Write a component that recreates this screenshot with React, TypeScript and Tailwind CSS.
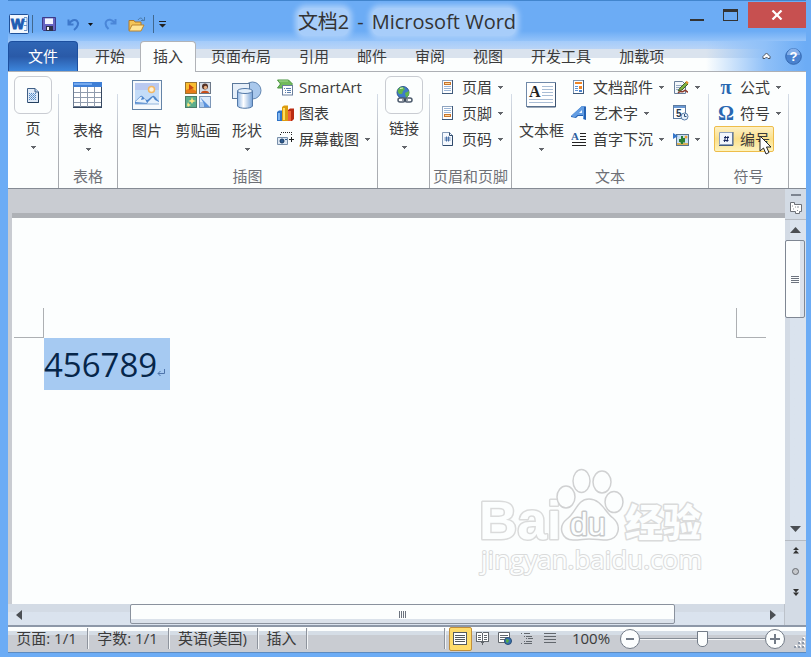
import type { ReactNode } from "react"
import { clsx } from "clsx"

const tabs = ["开始", "插入", "页面布局", "引用", "邮件", "审阅", "视图", "开发工具", "加载项"]

const Arrow = () => (
    <svg width="5" height="3" viewBox="0 0 5 3" className="shrink-0" shapeRendering="crispEdges"><path d="M0 0h5v1H4v1H3v1H2V2H1V1H0z" fill="#63666b" /></svg>
)

const Divider = () => (
    <div className="w-px shrink-0 mt-5 bg-linear-to-b from-[#d5dde8] via-[#b6b9be] to-[#a5a8ad]"></div>
)

type GroupProps = { label?: string, className: string, children: ReactNode }

const Group = ({ label, className, children }: GroupProps) => (
    <section className={clsx("shrink-0 flex flex-col justify-between", className)}>
        <div className="flex">{children}</div>
        <h2 className="h-6 text-center leading-6 text-[#6e7076]">{label}</h2>
    </section>
)

type BigProps = { label: string, icon: ReactNode, className: string, arrow?: boolean, framed?: boolean }

const BigButton = ({ label, icon, className, arrow, framed }: BigProps) => (
    <button type="button" className={clsx("flex flex-col items-center shrink-0 whitespace-nowrap", className)}>
        <span className={clsx("flex items-center justify-center", framed ? "size-[38px] mt-0.5 border border-[#c9ccd2] rounded-md" : "h-[42px]")}>{icon}</span>
        <span className="h-8 leading-7">{label}</span>
        {arrow && <Arrow />}
    </button>
)

type RowProps = { label?: string, icon: ReactNode, arrow?: boolean, name?: string }

const RowButton = ({ label, icon, arrow, name }: RowProps) => (
    <button type="button" aria-label={name} className="flex items-center gap-1.5 h-[26px] whitespace-nowrap">
        <span className="w-4 flex justify-center [&>*]:shrink-0">{icon}</span>
        {label && <span>{label}</span>}
        {arrow && <Arrow />}
    </button>
)

/* ---- ribbon icons ---- */

const PageIcon = () => (
    <svg width="12" height="15" viewBox="0 0 12 15">
        <path d="M.5.5h7.500l3.500 3.500v10.500H.5z" fill="#dfeaf7" stroke="#3f5f86" />
        <path d="M11.500 4v10.500H1" fill="none" stroke="#24405f" />
        <path d="M8 .5V4h3.500" fill="#bcd5f0" stroke="#3f5f86" />
        <path d="M2 5.500h7M2 7.500h7M2 9.500h7M2 11.500h7" stroke="#4f86c4" strokeDasharray="1 1" />
        <path d="M3 6.500h6M3 8.500h6M3 10.500h6" stroke="#6f9ed0" strokeDasharray="1 1" />
    </svg>
)

const TableIcon = () => (
    <svg width="30" height="26" viewBox="0 0 30 26" shapeRendering="crispEdges">
        <rect x=".5" y=".5" width="28" height="24" fill="#fff" stroke="#6c7c92" />
        <path d="M0 0h29v5H0z" fill="#3f7fd6" />
        <path d="M1 1h18v2H1z" fill="#74a9ee" />
        <path d="M1 10.500h28M1 15.500h28M1 20.500h28M7.500 5v20M14.500 5v20M21.500 5v20" stroke="#8f9bad" />
        <path d="M28.500 5v20H0" fill="none" stroke="#35475f" />
    </svg>
)

const PictureIcon = () => (
    <svg width="30" height="30" viewBox="0 0 30 30">
        <rect x=".5" y=".5" width="29" height="29" fill="#f6f9fc" stroke="#6484a8" />
        <rect x="3" y="3" width="24" height="21" fill="#c3dcf8" />
        <path d="M3 3h24v7H3z" fill="#b9c9f0" />
        <circle cx="19.500" cy="9.500" r="3" fill="#fff3d8" stroke="#f3b765" strokeWidth="1.500" />
        <path d="M3 21c3-1 5-6 7-5s3 4 5 4 5-5 7-4 3 4 5 5v3H3z" fill="#4e86cd" />
        <path d="M3 22c3-2 5-6 7-5l-1 3 4-1 2 4zM16 22l5-5 2 3 4 2v2H15z" fill="#e6f1fc" />
        <path d="M3 24h24" stroke="#92b4dc" />
    </svg>
)

const ClipArtIcon = () => (
    <svg width="26" height="26" viewBox="0 0 26 26">
        <rect x=".5" y=".5" width="11" height="11" fill="#f9bd2f" stroke="#9a7430" />
        <path d="M1 8l5-2 5 3v2H1z" fill="#e87a18" /><path d="M4 2l5 4-5 2z" fill="#c8480e" />
        <rect x="14.500" y=".5" width="11" height="11" fill="#d4dbe5" stroke="#6c7888" />
        <circle cx="20" cy="4.500" r="3" fill="#553328" /><circle cx="20.500" cy="5.500" r="1.700" fill="#e9b184" /><path d="M16 11c0-3 8-3 8 0z" fill="#c94e19" />
        <rect x=".5" y="14.500" width="11" height="11" fill="#5cae8c" stroke="#4b7d69" />
        <path d="M7 15l1 3 3 1-3 1-1 2-1-2-3-1 3-1zM3 20l1 2 2 1-2 1-1 1-1-2z" fill="#ffe680" />
        <rect x="14.500" y="14.500" width="11" height="11" fill="#dceafa" stroke="#7d97b8" />
        <path d="M15 15l10 10H19l-1-5z" fill="#5b93dc" /><path d="M15 20l3 0 1 5h-4z" fill="#a9c9ee" />
    </svg>
)

const ShapesIcon = () => (
    <svg width="30" height="28" viewBox="0 0 30 28">
        <defs>
            <linearGradient id="cyl"><stop offset="0" stopColor="#8fb6e4" /><stop offset=".4" stopColor="#fff" /><stop offset="1" stopColor="#75a2d8" /></linearGradient>
        </defs>
        <circle cx="20.500" cy="9.500" r="8.500" fill="#a9c8ec" stroke="#6286b1" />
        <rect x=".5" y="2.500" width="17" height="15" fill="#e6eff9" stroke="#5b789b" />
        <path d="M5.500 10v15c1 3 14 3 15 0V10z" fill="url(#cyl)" stroke="#5379a8" />
        <ellipse cx="13" cy="10" rx="7.500" ry="2.500" fill="#e2effc" stroke="#5379a8" />
    </svg>
)

const SmartArtIcon = () => (
    <svg width="17" height="17" viewBox="0 0 17 17">
        <path d="M.5 1h11l4 4-4 4H.5l3-4z" fill="#72bb5c" stroke="#4b9440" />
        <path d="M2 2h9" stroke="#a7dc91" />
        <rect x="5.500" y="6.500" width="10" height="9.500" fill="#fff" stroke="#6a7f9c" />
        <path d="M7 9.500h1M9 9.500h5M8 11.500h1M10 11.500h4M8 13.500h1M10 13.500h4" stroke="#5b7fae" />
    </svg>
)

const ChartIcon = () => (
    <svg width="17" height="17" viewBox="0 0 17 17">
        <path d="M0 7l2-1.500h4V16H0z" fill="#2f73c6" /><path d="M1 8h2v7H1z" fill="#81b6f0" />
        <path d="M5 2l2-1.500h4V16H5z" fill="#dc9c10" /><path d="M6 3h2v12H6z" fill="#ffe05c" />
        <path d="M11 5l2-1.500h4V14l-2 2h-4z" fill="#b92b12" /><path d="M11 6h3v10h-3z" fill="#ef6138" />
    </svg>
)

const ScreenshotIcon = () => (
    <svg width="17" height="16" viewBox="0 0 17 16">
        <path d="M4 1.500h11M3.500 3v1M14.500 3v2" stroke="#222" strokeDasharray="1 1" />
        <path d="M14.500 6v5M12 8.500h5" stroke="#222" />
        <path d="M.5 6.500h10v7H.5z" fill="#dbe6f2" stroke="#7990aa" />
        <circle cx="5" cy="10" r="2" fill="#2f5c92" stroke="#163960" />
        <path d="M8 8.500h2" stroke="#2f5c92" />
    </svg>
)

const LinkIcon = () => (
    <svg width="17" height="18" viewBox="0 0 17 18">
        <circle cx="7" cy="6.500" r="6" fill="#3d79ca" stroke="#30588d" />
        <path d="M3 2c3-2 5-1 6 1L7 5 6 8 3 8 1.500 5zM9 7l4-2v4l-3 3z" fill="#60b54b" />
        <path d="M4 2.500l3-.5" stroke="#d5f0c8" />
        <rect x="2" y="12" width="7" height="4" rx="2" fill="#fff" stroke="#4d5b6d" strokeWidth="1.500" />
        <rect x="9" y="12" width="7" height="4" rx="2" fill="none" stroke="#4d5b6d" strokeWidth="1.500" />
        <path d="M6 14h6" stroke="#27364a" />
    </svg>
)

const HeaderIcon = ({ y }: { y: number }) => (
    <svg width="12" height="14" viewBox="0 0 12 14" shapeRendering="crispEdges">
        <path d="M.5.5h10v13H.5z" fill="#fff" stroke="#8ea4bf" />
        <path d="M10.500 0v13.500H0" fill="none" stroke="#3f5a7b" />
        <path d="M2 2.500h7M2 4.500h7M2 6.500h7M2 8.500h7M2 10.500h7" stroke="#9ab5d6" />
        <rect x="2.500" y={y} width="6" height="2" fill="#fbd7a0" stroke="#c9752b" />
    </svg>
)

const PageNumberIcon = () => (
    <svg width="12" height="14" viewBox="0 0 12 14">
        <path d="M.5.5h7l3 3v10H.5z" fill="#f5f9fe" stroke="#8299b5" />
        <path d="M7.500.5v3h3v10H1" fill="none" stroke="#2f4a6b" />
        <path d="M4.500 4.500v5M6.500 4.500v5M2.500 6h6M2.500 8h6" stroke="#4a73a8" />
    </svg>
)

const TextBoxIcon = () => (
    <svg width="31" height="26" viewBox="0 0 31 26">
        <rect x=".5" y=".5" width="29" height="24" fill="#fff" stroke="#7089a8" />
        <path d="M29.500 1v24H1" fill="none" stroke="#3e5572" />
        <text x="3" y="15" fontSize="16" fontWeight="700" fill="#222" fontFamily="Liberation Serif, serif">A</text>
        <path d="M16 4.500h11M16 7.500h11M16 10.500h11M16 13.500h11M3 17.500h24M3 20.500h24" stroke="#a9bdd5" />
    </svg>
)

const PartsIcon = () => (
    <svg width="12" height="14" viewBox="0 0 12 14" shapeRendering="crispEdges">
        <path d="M.5.5h10v13H.5z" fill="#fff" stroke="#7c95b3" />
        <path d="M10.500 0v13.500H0" fill="none" stroke="#3f5a7b" />
        <path d="M2 2h7v2H2zM6 6h3v3H6z" fill="#ee8425" />
        <path d="M2 6.500h3M2 8.500h3M2 10.500h3" stroke="#5f92d2" /><path d="M6 10h3v2H6z" fill="#4c83cc" />
    </svg>
)

const WordArtIcon = () => (
    <svg width="16" height="16" viewBox="0 0 16 16">
        <path d="M0 11L11 1l4 .5V15l-3-1v-3H7l-2 2-5-1z" fill="#2462b4" />
        <path d="M11 1l2 .3V14l-1-.4V10H6.500L4 12.500 0 11z" fill="#639de2" />
        <path d="M8 8l3-3v3z" fill="#f3f8ff" />
    </svg>
)

const DropCapIcon = () => (
    <svg width="16" height="15" viewBox="0 0 16 15">
        <text x="0" y="8" fontSize="11" fontWeight="700" fill="#2d5e9f" fontFamily="Liberation Serif, serif">A</text>
        <path d="M9 1.500h6M9 4.500h6M9 7.500h6M1 10.500h14M1 13.500h14" stroke="#222" />
    </svg>
)

const SignatureIcon = () => (
    <svg width="17" height="15" viewBox="0 0 17 15">
        <path d="M1.500 1.500h8l3 3v9h-11z" fill="#f3f7fb" stroke="#687f9b" />
        <path d="M3 5.500h6M3 7.500h4M3 9.500h3" stroke="#96abc4" />
        <path d="M5 11l2-3 6-6 2 2-6 6z" fill="#7cb342" stroke="#435b29" />
        <path d="M5 13c3-3 4 0 6-2s2 1 4 1" fill="none" stroke="#8d3a2b" strokeWidth="1.500" />
        <path d="M13 1.500l2 2" stroke="#e69433" strokeWidth="2" />
    </svg>
)

const DateIcon = () => (
    <svg width="16" height="16" viewBox="0 0 16 16">
        <rect x=".5" y=".5" width="12" height="13" fill="#fff" stroke="#5d7ba0" />
        <path d="M1 1h11v2H1z" fill="#6998d3" />
        <text x="3" y="12" fontSize="10" fontWeight="700" fill="#26384f" fontFamily="Liberation Sans, sans-serif">5</text>
        <circle cx="11.500" cy="11.500" r="3.500" fill="#e5effa" stroke="#587da9" /><path d="M11.500 9v2.500h2" fill="none" stroke="#2e4f79" />
    </svg>
)

const ObjectIcon = () => (
    <svg width="17" height="15" viewBox="0 0 17 15">
        <rect x="3.500" y="2.500" width="12" height="11" fill="#c8dff5" stroke="#57738f" />
        <path d="M0 1l5 3-5 3z" fill="#3476cb" />
        <path d="M4 11h11v2H4z" fill="#d9b157" /><circle cx="13" cy="5" r="1.500" fill="#f1a53a" />
        <path d="M7 10V7M9 12V4M7 9.500h4V6" fill="none" stroke="#2c8133" strokeWidth="2" />
    </svg>
)

const NumberIcon = () => (
    <svg width="15" height="14" viewBox="0 0 15 14">
        <path d="M.5.5h13v12H.5z" fill="#f2f6fd" stroke="#8da0bd" /><path d="M14 0v13.500H0" fill="none" stroke="#405a7f" />
        <path d="M6.500 4l-1 6M9 4l-1 6M5 5.500h5M4.500 8.500h5" stroke="#18285e" />
    </svg>
)

const Greek = ({ children }: { children: string }) => (
    <span className="font-['Liberation_Serif',serif] text-xl font-bold text-[#2867b1] leading-5">{children}</span>
)

/* ---- window parts ---- */

const TitleBar = () => (
    <header className="grid grid-cols-[1fr_auto_1fr] h-[41px] pt-0.5 border-t border-[#4285cd] bg-linear-to-b from-[#6cacf5] from-75% to-[#94c3f9]">
        <div className="flex items-center gap-[9px] pt-1 pl-px [&_svg]:shrink-0">
            <svg width="20" height="20" viewBox="0 0 20 20">
                <rect x=".5" y=".5" width="19" height="19" rx="1" fill="#f2f7fd" stroke="#1f5199" />
                <path d="M15 3.500h3v13h-3M15 7.500h3M15 11.500h3" fill="none" stroke="#6b93ca" />
                <text x="2" y="15" fontSize="14" fontWeight="700" fill="#1d5cb2" stroke="#1d5cb2" fontFamily="Liberation Sans, sans-serif">W</text>
            </svg>
            <i className="w-px h-[18px] -ml-1.5 bg-[#41688f]"></i>
            <button type="button" aria-label="保存">
                <svg width="14" height="14" viewBox="0 0 14 14"><path d="M.5.5h13v13h-12l-1-1z" fill="#6664c2" stroke="#3c3b88" /><path d="M3 1h8v6H3z" fill="#f3f5ff" /><path d="M3 1h8v1H3z" fill="#b8bce4" /><path d="M4 9h7v5H4z" fill="#2e3048" /><path d="M5 10h2v3H5z" fill="#f2f2f7" /></svg>
            </button>
            <button type="button" aria-label="撤消" className="flex items-center gap-2 ml-0.5">
                <svg width="13" height="13" viewBox="0 0 13 13"><path d="M1.500 1.500v5h5M2 6c2-4 6-5 8-3s1 6-3 9" fill="none" stroke="#3d78cb" strokeWidth="2" /></svg>
                <svg width="5" height="3" viewBox="0 0 5 3"><path d="M0 0h5L2.500 3z" fill="#111" /></svg>
            </button>
            <button type="button" aria-label="恢复" className="ml-0.5">
                <svg width="13" height="12" viewBox="0 0 13 12"><path d="M11.500 1v4.500h-5M11 5C8 1 4 1 2.500 3s-1 5 2 8" fill="none" stroke="#4a86d8" strokeWidth="2" /></svg>
            </button>
            <button type="button" aria-label="打开" className="ml-0.5">
                <svg width="18" height="15" viewBox="0 0 18 15"><path d="M1 13.500v-10h5l1 1.500h6v3" fill="#f4c558" stroke="#b0792b" /><path d="M1 14l3-6h12l-3 6z" fill="#ffe596" stroke="#bb8530" /><path d="M10 3c2-3 4-2 5 0M13 3.500h3.500V0" fill="none" stroke="#4a7aab" /></svg>
            </button>
            <i className="w-px h-[18px] -ml-0.5 bg-[#41688f]"></i>
            <button type="button" aria-label="自定义快速访问工具栏" className="-ml-1">
                <svg width="7" height="7" viewBox="0 0 7 7"><path d="M0 0h7v1H0zM0 3h7L3.500 6.500z" fill="#222" /></svg>
            </button>
        </div>
        <h1 className="self-center flex gap-2 text-xl leading-7 whitespace-nowrap text-[#333]">
            <span className="bg-[#a7cdfa] rounded-lg shadow-[0_0_5px_3px_#a7cdfa]">文档2</span>
            <span>-</span>
            <span className="bg-[#a7cdfa] rounded-lg shadow-[0_0_5px_3px_#a7cdfa]">Microsoft Word</span>
        </h1>
        <div className="flex justify-end items-start">
            <button type="button" aria-label="最小化" className="mt-4 mr-[19px] w-3.5 h-0.5 bg-[#333]"></button>
            <button type="button" aria-label="最大化" className="mt-1.5 mr-2.5 w-[15px] h-3 border border-t-3 border-[#333]"></button>
            <button type="button" aria-label="关闭" className="-mt-px w-[58px] h-[26px] bg-[#c75050] flex items-center justify-center">
                <svg width="12" height="10" viewBox="0 0 12 10"><path d="M1.500.5l9 9M10.500.5l-9 9" stroke="#fff" strokeWidth="2.200" /></svg>
            </button>
        </div>
    </header>
)

const TabBar = () => (
    <nav className="flex h-[30px] bg-[linear-gradient(to_right,transparent_calc(100%-100px),#8fc0f8_calc(100%-40px),#6cacf5),linear-gradient(to_bottom,#a3cbfa_0,#b9d4f6_8px,#dae3ee_8px,#dae3ee_17px,#fcfefe_17px)]">
        <button type="button" className="w-[70px] shrink-0 mr-[3px] rounded-t-sm border border-b-0 border-[#1c4f9f] bg-linear-to-b from-[#2f66b5] via-[#2a5aa8] to-[#3d86dc] text-white">文件</button>
        {tabs.map((tab) => (
            <button key={tab} type="button" className={clsx("shrink-0 whitespace-nowrap", tab === "插入" ? "relative h-[31px] px-3 mx-px pb-px bg-[#fcfefe] border border-b-0 border-[#b0b3b8] rounded-t-sm" : "px-3.5")}>{tab}</button>
        ))}
        <div className="ml-auto mr-1 flex items-center gap-3.5">
            <button type="button" aria-label="功能区最小化">
                <svg width="9" height="8" viewBox="0 0 9 8"><path d="M1 4.500L4.500 1 8 4.500v2H6L4.500 5 3 6.500H1z" fill="#fff" stroke="#4c5562" /></svg>
            </button>
            <button type="button" aria-label="帮助">
                <svg width="17" height="17" viewBox="0 0 17 17"><circle cx="8.500" cy="8.500" r="7.800" fill="#4a82cf" stroke="#3467ae" /><path d="M2 7a6.500 6.500 0 0 1 13 0z" fill="#83aee8" /><text x="8.500" y="13" fontSize="13" fontWeight="700" fill="#fff" textAnchor="middle" fontFamily="Liberation Sans, sans-serif">?</text></svg>
            </button>
        </div>
    </nav>
)

const Ribbon = () => (
    <div className="flex h-[118px] pt-0.5 bg-[#fcfefe] border-y border-t-[#adb0b5] border-b-[#858b94]">
        <Group className="w-[50px]">
            <BigButton label="页" icon={<PageIcon />} className="ml-1.5" arrow framed />
        </Group>
        <Divider />
        <Group label="表格" className="w-[58px]">
            <BigButton label="表格" icon={<TableIcon />} className="w-full" arrow />
        </Group>
        <Divider />
        <Group label="插图" className="w-[259px]">
            <BigButton label="图片" icon={<PictureIcon />} className="w-11 ml-[7px]" />
            <BigButton label="剪贴画" icon={<ClipArtIcon />} className="w-[58px]" />
            <BigButton label="形状" icon={<ShapesIcon />} className="w-10 mr-2.5" arrow />
            <div className="flex flex-col">
                <RowButton label="SmartArt" icon={<SmartArtIcon />} />
                <RowButton label="图表" icon={<ChartIcon />} />
                <RowButton label="屏幕截图" icon={<ScreenshotIcon />} arrow />
            </div>
        </Group>
        <Divider />
        <Group className="w-[51px]">
            <BigButton label="链接" icon={<LinkIcon />} className="ml-[7px]" arrow framed />
        </Group>
        <Divider />
        <Group label="页眉和页脚" className="w-[81px]">
            <div className="flex flex-col ml-2.5">
                <RowButton label="页眉" icon={<HeaderIcon y={2.5} />} arrow />
                <RowButton label="页脚" icon={<HeaderIcon y={8.5} />} arrow />
                <RowButton label="页码" icon={<PageNumberIcon />} arrow />
            </div>
        </Group>
        <Divider />
        <Group label="文本" className="w-[196px]">
            <BigButton label="文本框" icon={<TextBoxIcon />} className="w-[45px] ml-[7px] mr-[7px]" arrow />
            <div className="flex flex-col mr-[9px]">
                <RowButton label="文档部件" icon={<PartsIcon />} arrow />
                <RowButton label="艺术字" icon={<WordArtIcon />} arrow />
                <RowButton label="首字下沉" icon={<DropCapIcon />} arrow />
            </div>
            <div className="flex flex-col">
                <RowButton name="签名行" icon={<SignatureIcon />} arrow />
                <RowButton name="日期和时间" icon={<DateIcon />} />
                <RowButton name="对象" icon={<ObjectIcon />} arrow />
            </div>
        </Group>
        <Divider />
        <Group label="符号" className="w-[79px]">
            <div className="flex flex-col pl-[5px]">
                <div className="pl-1">
                    <RowButton label="公式" icon={<Greek>π</Greek>} arrow />
                    <RowButton label="符号" icon={<Greek>Ω</Greek>} arrow />
                </div>
                <div className="relative w-[60px] pl-[3px] border border-[#eebd4a] rounded-xs bg-linear-to-b from-[#fdf0c3] via-[#fbe08a] to-[#fdf3bd] h-[26px] flex items-center">
                    <RowButton label="编号" icon={<NumberIcon />} />
                    {/* mouse pointer */}
                    <svg width="13" height="20" viewBox="0 0 13 20" className="absolute left-11 top-2"><path d="M1 1v15l3.500-3 2.500 6 3-1.500L7.500 12H12z" fill="#fff" stroke="#222" /></svg>
                </div>
            </div>
        </Group>
        <Divider />
    </div>
)

const Watermark = () => (
    <svg width="232" height="112" viewBox="0 0 232 112" className="absolute right-[75px] bottom-[26px]" stroke="#dadbdb" strokeWidth="3" fill="#fcfefe" strokeLinejoin="round">
        <g style={{ paintOrder: "stroke" }} fontFamily="Liberation Sans, sans-serif" fontWeight="700">
            <text x="1" y="73" fontSize="53">Bai</text>
        </g>
        <g strokeWidth="1.500" stroke="#d0d1d2">
            <ellipse cx="88" cy="31" rx="9" ry="11" />
            <ellipse cx="103.500" cy="15" rx="8.500" ry="11.500" />
            <ellipse cx="124" cy="16" rx="9" ry="11" />
            <ellipse cx="136" cy="36" rx="9" ry="10.500" />
            <path d="M111 33c-12 0-13 14-22 20-10 8-5 21 6 21 8 0 10-1 16-1s12 1 18 1c12-1 15-14 6-22-8-6-12-19-24-19z" />
        </g>
        <g style={{ paintOrder: "stroke" }}>
            <text x="92" y="69" fontSize="32" fontFamily="Liberation Sans, sans-serif" stroke="#c7c9ca" strokeWidth="3">du</text>
            <text x="147" y="70" fontSize="38" fontWeight="900" fontFamily="Noto Sans CJK SC, sans-serif">经验</text>
            <text x="3" y="103" fontSize="26" fontFamily="Open Sans, sans-serif" strokeWidth="2">jingyan.baidu.com</text>
        </g>
    </svg>
)

const Page = () => (
    <main className="relative flex-1 min-h-[386px] ml-1 pt-[90px] bg-[#fcfefe]">
        <div className="flex justify-between pl-0.5 pr-[19px]">
            <i className="size-[30px] border-r border-b border-[#adb0b3]"></i>
            <i className="size-[30px] border-l border-b border-[#adb0b3]"></i>
        </div>
        <p className="inline-flex items-center ml-8 h-[52px] pt-0.5 pr-[5px] bg-[#a6caf2] text-[33px] text-[#06264a]">
            456789
            <svg width="8" height="8" viewBox="0 0 8 8" className="mt-4"><path d="M7.500 0v4.500H1M3.500 2L1 4.500 3.500 7" fill="none" stroke="#4e74ab" /></svg>
        </p>
        <Watermark />
    </main>
)

const HScroll = () => (
    <div className="flex h-[21px] bg-linear-to-b from-[#d3dbe5] from-40% to-[#dae3ee] to-40%">
        <button type="button" aria-label="向左滚动" className="w-[22px] shrink-0 flex items-center justify-center"><svg width="6" height="10" viewBox="0 0 6 10"><path d="M6 0v10L0 5z" fill="#4b4f54" /></svg></button>
        <i className="grow-[100] basis-0"></i>
        <div className="grow-[544] basis-0 h-5 border border-[#8a929e] rounded-xs bg-linear-to-b from-[#fcfefe] from-80% to-[#dbe2eb] to-80% flex items-center justify-center gap-px">
            <i className="w-px h-[7px] bg-[#6d747f]"></i>
            <i className="w-px h-[7px] bg-[#6d747f]"></i>
            <i className="w-px h-[7px] bg-[#6d747f]"></i>
            <i className="w-px h-[7px] bg-[#6d747f]"></i>
        </div>
        <i className="grow-[88] basis-0"></i>
        <button type="button" aria-label="向右滚动" className="w-[22px] shrink-0 flex items-center justify-center border-r border-[#bcc2ca]"><svg width="6" height="10" viewBox="0 0 6 10"><path d="M0 0v10l6-5z" fill="#4b4f54" /></svg></button>
    </div>
)

const VScroll = () => (
    <aside className="w-[21px] shrink-0 flex flex-col items-center bg-linear-to-r from-[#d3dbe5] from-25% to-[#dae3ee] to-25%">
        <div className="w-full h-[31px] shrink-0 pt-[5px] flex flex-col items-center gap-1.5 border-b border-[#b5bbc3] bg-[#d3dbe5]">
            <i className="w-2.5 h-0.5 bg-[#7d8591]"></i>
            <button type="button" aria-label="标尺">
                <svg width="12" height="12" viewBox="0 0 12 12"><path d="M.5.5h4v2h7v7h-2v2h-4v-2h-5z" fill="#fff" stroke="#6d7178" /><path d="M2 4h1M5 5h1M8 4v2M3 7h1M7 8l1 1" fill="none" stroke="#8b9098" /></svg>
            </button>
        </div>
        <button type="button" aria-label="向上滚动" className="h-5 shrink-0"><svg width="11" height="6" viewBox="0 0 11 6"><path d="M0 6h11L5.500 0z" fill="#4b4f54" /></svg></button>
        <div className="w-5 h-[78px] shrink-0 self-start border border-[#7f8793] rounded-xs bg-linear-to-r from-[#fcfefe] from-80% to-[#dbe2eb] to-80% flex flex-col items-center justify-center gap-px">
            <i className="w-2 h-px bg-[#6d747f]"></i>
            <i className="w-2 h-px bg-[#6d747f]"></i>
            <i className="w-2 h-px bg-[#6d747f]"></i>
            <i className="w-2 h-px bg-[#6d747f]"></i>
        </div>
        <button type="button" aria-label="向下滚动" className="mt-auto h-[22px] shrink-0"><svg width="11" height="6" viewBox="0 0 11 6"><path d="M0 0h11L5.500 6z" fill="#4b4f54" /></svg></button>
        <div className="w-full h-[85px] shrink-0 pt-1.5 pb-[29px] flex flex-col items-center justify-between border-t border-[#b5bbc3] bg-[#d3dbe5]">
            <button type="button" aria-label="前一页"><svg width="6" height="7" viewBox="0 0 6 7" className="block"><path d="M3 0l3 3H0zM3 3l3 3.500H0z" fill="#333" /></svg></button>
            <button type="button" aria-label="选择浏览对象" className="size-[7px] rounded-full border border-[#666a70] bg-[#c5c8cc]"></button>
            <button type="button" aria-label="下一页"><svg width="6" height="7" viewBox="0 0 6 7" className="block"><path d="M0 0h6L3 3.500zM0 3.500h6L3 7z" fill="#333" /></svg></button>
        </div>
    </aside>
)

const StatusDivider = () => <i className="w-0.5 shrink-0 my-px border-l border-[#8e949d] bg-[#f3f5f7]"></i>

const StatusBar = () => (
    <footer className="flex h-[26px] pb-0.5 border-b border-[#5c8bc0] bg-[linear-gradient(to_bottom,#fcfefe_0,#fcfefe_4px,#d5dde6_4px,#d5dde6_8px,#c9ccd2_8px)] whitespace-nowrap">
        <button type="button" className="w-[79px] pr-0.5 shrink-0">页面: 1/1</button>
        <StatusDivider />
        <button type="button" className="w-[79px] pr-0.5 shrink-0">字数: 1/1</button>
        <StatusDivider />
        <button type="button" className="w-[87px] pr-0.5 shrink-0">英语(美国)</button>
        <StatusDivider />
        <button type="button" className="w-[47px] pr-0.5 shrink-0">插入</button>
        <StatusDivider />
        <i className="flex-1"></i>
        <StatusDivider />
        <div className="flex shrink-0 items-center ml-[3px]">
            <button type="button" aria-label="页面视图" className="w-[23px] h-6 border border-[#c28f3a] rounded-xs bg-[#ffdc6b] flex items-center justify-center">
                <svg width="15" height="13" viewBox="0 0 15 13" shapeRendering="crispEdges"><path d="M.5.5h13v12H.5z" fill="#fff" stroke="#545a5f" /><path d="M2 3.500h10M2 5.500h10M2 7.500h10M2 9.500h10" stroke="#545a5f" /></svg>
            </button>
            <button type="button" aria-label="阅读版式视图" className="w-[22px] flex justify-center">
                <svg width="14" height="13" viewBox="0 0 14 13" shapeRendering="crispEdges"><path d="M.5.5h5l1 1 1-1h5v9h-5l-1 2-1-2h-5z" fill="#fff" stroke="#62676d" /><path d="M2 3.500h3M2 5.500h3M2 7.500h3M8 3.500h3M8 5.500h3M8 7.500h3M6.500 2v10" stroke="#62676d" /></svg>
            </button>
            <button type="button" aria-label="Web 版式视图" className="w-[22px] flex justify-center">
                <svg width="14" height="13" viewBox="0 0 14 13"><path d="M.5.5h11v10H.5z" fill="#fff" stroke="#62676d" /><path d="M2 3.500h8M2 5.500h8M2 7.500h5" stroke="#62676d" /><circle cx="10" cy="9" r="3.500" fill="#3774b3" stroke="#2b4c73" /><path d="M8 7l3 1-1 3-2-1z" fill="#57ad45" /></svg>
            </button>
            <button type="button" aria-label="大纲视图" className="w-[22px] flex justify-center">
                <svg width="12" height="11" viewBox="0 0 12 11" shapeRendering="crispEdges"><path d="M0 .5h1M3 .5h6M3 3h1M5 3h6M5 5.500h1M7 5.500h5M3 8h1M5 8h6M0 10.500h1M3 10.500h8" stroke="#62676d" /></svg>
            </button>
            <button type="button" aria-label="草稿" className="w-6 flex justify-center">
                <svg width="12" height="11" viewBox="0 0 12 11" shapeRendering="crispEdges"><path d="M0 .5h12M0 3.500h12M0 6.500h12M0 9.500h12" stroke="#62676d" /></svg>
            </button>
            <button type="button" className="w-[58px]">100%</button>
        </div>
        <div className="flex shrink-0 items-center">
            <button type="button" aria-label="缩小" className="size-5 rounded-full border border-[#737c88] bg-[#fcfefe] flex items-center justify-center"><i className="w-2 h-0.5 bg-[#737c88]"></i></button>
            <input type="range" aria-label="显示比例" min="0" max="100" defaultValue="50" className="w-[125px] h-4 appearance-none bg-[linear-gradient(to_bottom,transparent_7px,#858c95_7px,#858c95_8px,#f3f5f7_8px,#f3f5f7_9px,transparent_9px)] [&::-webkit-slider-thumb]:appearance-none [&::-webkit-slider-thumb]:w-[11px] [&::-webkit-slider-thumb]:h-4 [&::-webkit-slider-thumb]:bg-[#fcfefe] [&::-webkit-slider-thumb]:border [&::-webkit-slider-thumb]:border-[#737c88] [&::-webkit-slider-thumb]:rounded-b-[5px]" />
            <button type="button" aria-label="放大" className="size-5 rounded-full border border-[#737c88] bg-[#fcfefe] flex items-center justify-center">
                <svg width="10" height="10" viewBox="0 0 10 10"><path d="M0 5h10M5 0v10" stroke="#737c88" strokeWidth="2" /></svg>
            </button>
        </div>
        <svg width="13" height="13" viewBox="0 0 13 13" className="self-end ml-2 shrink-0" shapeRendering="crispEdges">
            <path d="M10 0h2v2h-2zM6 4h2v2H6zM10 4h2v2h-2zM2 8h2v2H2zM6 8h2v2H6zM10 8h2v2h-2z" fill="#fff" />
            <path d="M9 1h2v2H9zM5 5h2v2H5zM9 5h2v2H9zM1 9h2v2H1zM5 9h2v2H5zM9 9h2v2H9z" fill="#8e99a9" />
        </svg>
    </footer>
)

const App = () => {
    return (
        <div className="min-h-screen flex flex-col pl-2 pr-[5px] pb-1 bg-[#6cacf5] overflow-hidden text-[15px] text-[#3b3b3b] font-['Open_Sans','Noto_Sans_CJK_SC',sans-serif]">
            <TitleBar />
            <TabBar />
            <Ribbon />
            <div className="flex-1 flex border-b-2 border-[#8d98a8]">
                <div className="flex-1 flex flex-col bg-[#c9ccd2]">
                    <div className="h-[29px] shrink-0 ml-1 border-b-5 border-[#aeb1b6]"></div>
                    <Page />
                    <HScroll />
                </div>
                <VScroll />
            </div>
            <StatusBar />
        </div>
    )
}

export default App
